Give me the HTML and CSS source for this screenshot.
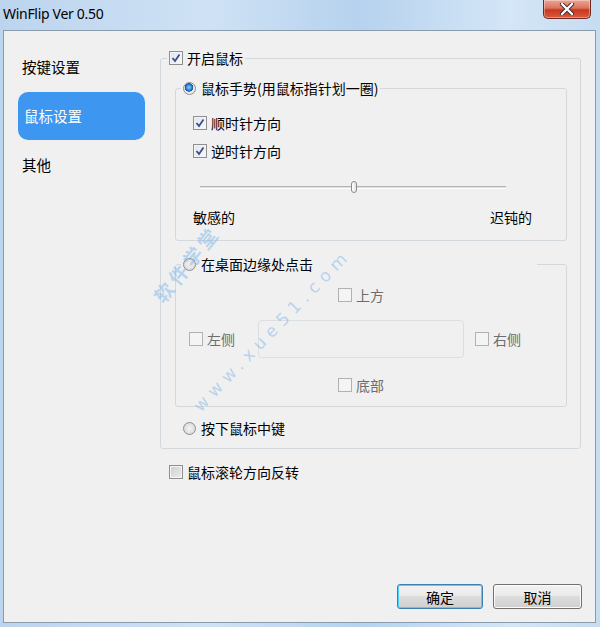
FILE: index.html
```html
<!DOCTYPE html>
<html>
<head>
<meta charset="utf-8">
<link rel="stylesheet" href="styles.css">
</head>
<body>
<div class="window">
  <div class="titlebar">
    <span class="title">WinFlip Ver 0.50</span>
    <div class="close">
      <svg width="16" height="12" viewBox="0 0 16 12"><path d="M3 1 L13 11 M13 1 L3 11" stroke="#3b2a2a" stroke-width="4.2" stroke-linecap="round"/><path d="M3 1 L13 11 M13 1 L3 11" stroke="#ffffff" stroke-width="2.4" stroke-linecap="round"/></svg>
    </div>
  </div>
  <div class="client">
    <nav class="sidebar">
      <div class="nav-item">按键设置</div>
      <div class="nav-item active">鼠标设置</div>
      <div class="nav-item">其他</div>
    </nav>
    <main class="main">
      <fieldset class="group outer">
        <legend class="opt lg-outer"><span class="cb checked"><svg width="12" height="12" viewBox="0 0 12 12"><path d="M2.5 6 L5 9 L9.5 2.5" fill="none" stroke="#3b4f8c" stroke-width="1.8"/></svg></span>开启鼠标</legend>
        <div class="outer-body">
          <fieldset class="group g1">
            <legend class="opt lg-inner"><span class="rb on"></span>鼠标手势(用鼠标指针划一圈)</legend>
            <div class="g1-body">
              <div class="opt row"><span class="cb checked"><svg width="12" height="12" viewBox="0 0 12 12"><path d="M2.5 6 L5 9 L9.5 2.5" fill="none" stroke="#3b4f8c" stroke-width="1.8"/></svg></span>顺时针方向</div>
              <div class="opt row r2"><span class="cb checked"><svg width="12" height="12" viewBox="0 0 12 12"><path d="M2.5 6 L5 9 L9.5 2.5" fill="none" stroke="#3b4f8c" stroke-width="1.8"/></svg></span>逆时针方向</div>
              <div class="slider"><div class="track"></div><div class="thumb"></div></div>
              <div class="scale"><span>敏感的</span><span>迟钝的</span></div>
            </div>
          </fieldset>
          <fieldset class="group g2">
            <legend class="opt lg-inner lg-wide"><span class="rb"></span>在桌面边缘处点击</legend>
            <div class="edges">
              <div class="opt row dis top"><span class="cb"></span>上方</div>
              <div class="opt row dis left"><span class="cb"></span>左侧</div>
              <div class="screen"></div>
              <div class="opt row dis right"><span class="cb"></span>右侧</div>
              <div class="opt row dis bottom"><span class="cb"></span>底部</div>
            </div>
          </fieldset>
          <div class="opt row middle"><span class="rb"></span>按下鼠标中键</div>
        </div>
      </fieldset>
      <div class="opt row wheel"><span class="cb plain"></span>鼠标滚轮方向反转</div>
      <div class="buttons">
        <button class="btn default">确定</button>
        <button class="btn">取消</button>
      </div>
    </main>
  </div>
  <span class="wm wm-cn">软件学堂</span>
  <span class="wm wm-en">www.xue51.com</span>
</div>
</body>
</html>
```
FILE: styles.css
```css
* { box-sizing: border-box; }
html, body { margin: 0; padding: 0; }
body {
  width: 600px;
  height: 627px;
  overflow: hidden;
  font-family: "Noto Sans CJK SC", "Noto Sans", sans-serif;
  font-size: 14px;
  color: #000;
}
.window {
  position: relative;
  width: 600px;
  height: 627px;
  background: linear-gradient(90deg, #bcd4ee 0%, #cfe2f5 35%, #b6d2ee 60%, #d4e6f7 85%, #c6dcf1 100%);
  display: flex;
  flex-direction: column;
}
.titlebar {
  height: 30px;
  display: flex;
  align-items: flex-start;
  justify-content: space-between;
  padding-left: 3px;
}
.title {
  font-family: "Noto Sans", "Open Sans", sans-serif;
  font-size: 14px;
  line-height: 18px;
  margin-top: 5px;
  color: #000;
  letter-spacing: -0.3px;
}
.close {
  width: 48px;
  height: 19px;
  margin-right: 9px;
  border: 1px solid #6b2a22;
  border-top: none;
  border-radius: 0 0 5px 5px;
  background: linear-gradient(180deg, #eba596 0%, #dd735c 45%, #c7381f 55%, #dc5a3e 100%);
  box-shadow: inset 0 0 0 1px rgba(255,255,255,0.35);
  display: flex;
  align-items: center;
  justify-content: center;
}
.client {
  flex: 1;
  margin: 0 4px 4px 3px;
  border: 1px solid #8a9bab;
  background: #f0f0f0;
  display: flex;
}
.sidebar {
  width: 156px;
  padding-top: 12px;
  display: flex;
  flex-direction: column;
  gap: 1px;
}
.nav-item {
  margin-left: 14px;
  width: 127px;
  height: 48px;
  line-height: 48px;
  padding-left: 4px;
  border-radius: 10px;
  font-size: 14.5px;
}
.nav-item.active {
  background: #3d96f0;
  color: #fff;
  padding-left: 6px;
}
.main {
  flex: 1;
  display: flex;
  flex-direction: column;
  padding-top: 18px;
  padding-bottom: 13px;
}
.group {
  margin: 0;
  padding: 0;
  border: 1px solid #d3d8dc;
  border-radius: 3px;
  min-width: 0;
}
.outer {
  width: 421px;
}
.opt {
  display: flex;
  align-items: center;
  height: 20px;
  line-height: 20px;
  white-space: nowrap;
}
legend.opt {
  height: 18px;
  line-height: 18px;
  padding: 0 2px;
}
.lg-outer { margin-left: 6px; }
.lg-inner { margin-left: 5px; }
.lg-wide { width: 356px; }
.cb {
  width: 14px;
  height: 14px;
  flex: none;
  border: 1px solid #8f8f8f;
  background: linear-gradient(135deg, #dcdcdc 0%, #f4f4f4 60%, #ffffff 100%);
  box-shadow: inset 0 0 0 1px #f4f4f4;
  margin-right: 4px;
  display: flex;
  align-items: center;
  justify-content: center;
}
.cb.checked { background: linear-gradient(135deg, #e0e6ee 0%, #f7f9fb 100%); }
.cb.plain { background: linear-gradient(135deg, #cfcfcf 0%, #ececec 100%); }
.rb {
  width: 13px;
  height: 13px;
  flex: none;
  border-radius: 50%;
  border: 1px solid #8e8f8f;
  background: radial-gradient(circle at 50% 50%, #f5f5f5 0%, #dcdcdc 70%, #cfcfcf 100%);
  margin-right: 5px;
}
.rb.on {
  background: radial-gradient(circle at 45% 40%, #8fd0ff 0%, #2a7fd6 32%, #1b4f96 45%, #e6e6e6 50%, #f3f3f3 100%);
}
.outer-body {
  padding: 12px 0 10px 14px;
}
.g1 { width: 392px; }
.g1-body {
  padding: 16px 0 14px 17px;
}
.r2 { margin-top: 8px; }
.slider {
  position: relative;
  height: 20px;
  margin-top: 16px;
  margin-left: 7px;
  width: 306px;
}
.track {
  position: absolute;
  left: 0;
  right: 0;
  top: 9px;
  height: 3px;
  border-top: 1px solid #b5b5b5;
  border-bottom: 1px solid #ffffff;
  background: #dedede;
}
.thumb {
  position: absolute;
  left: 151px;
  top: 4px;
  width: 6px;
  height: 12px;
  border: 1px solid #8c8c8c;
  border-radius: 3px;
  background: linear-gradient(90deg, #ffffff, #e2e2e2);
}
.scale {
  display: flex;
  justify-content: space-between;
  margin-top: 11px;
  width: 339px;
  height: 18px;
  line-height: 18px;
}
.g2 {
  width: 392px;
  margin-top: 14px;
}
.edges {
  display: grid;
  grid-template-columns: 69px 206px auto;
  grid-template-rows: 20px 53px 37px;
  padding: 12px 0 11px 13px;
}
.edges .top { grid-column: 2; grid-row: 1; justify-self: center; }
.edges .left { grid-column: 1; grid-row: 2; align-self: center; margin-top: 15px; }
.edges .screen {
  grid-column: 2; grid-row: 2;
  border: 1px solid #dcdfe2;
  border-radius: 4px;
  margin-top: 15px;
  height: 38px;
}
.edges .right { grid-column: 3; grid-row: 2; align-self: center; padding-left: 11px; margin-top: 15px; }
.edges .bottom { grid-column: 2; grid-row: 3; justify-self: center; align-self: start; margin-top: 17px; }
.dis { color: #6d6d6d; }
.dis .cb {
  border-color: #b1b1b1;
  background: #f4f4f4;
  box-shadow: none;
}
.middle {
  margin-top: 11px;
  margin-left: 8px;
}
.wheel {
  margin-top: 13px;
  margin-left: 9px;
}
.buttons {
  margin-top: auto;
  display: flex;
  justify-content: flex-end;
  gap: 10px;
  padding-right: 13px;
}
.btn {
  font-family: "Noto Sans CJK SC", sans-serif;
  font-size: 14px;
  height: 25px;
  padding: 0;
  border: 1px solid #707070;
  border-radius: 3px;
  background: linear-gradient(180deg, #f2f2f2 0%, #ebebeb 45%, #dddddd 50%, #cfcfcf 100%);
  box-shadow: inset 0 0 0 1px #fbfbfb;
  color: #000;
  width: 89px;
}
.btn.default {
  width: 86px;
  border-color: #3c7fb1;
  box-shadow: inset 0 0 0 1px #48d4ff;
}
.wm {
  position: absolute;
  color: rgba(110, 175, 235, 0.45);
  font-family: "DejaVu Sans", "Noto Sans CJK SC", sans-serif;
  white-space: nowrap;
  pointer-events: none;
}
.wm-cn {
  left: 140px;
  top: 250px;
  font-size: 19px;
  letter-spacing: 4px;
  transform: rotate(-51deg);
  font-weight: bold;
}
.wm-en {
  left: 163px;
  top: 320px;
  font-size: 17px;
  letter-spacing: 6px;
  transform: rotate(-46deg);
}
```
